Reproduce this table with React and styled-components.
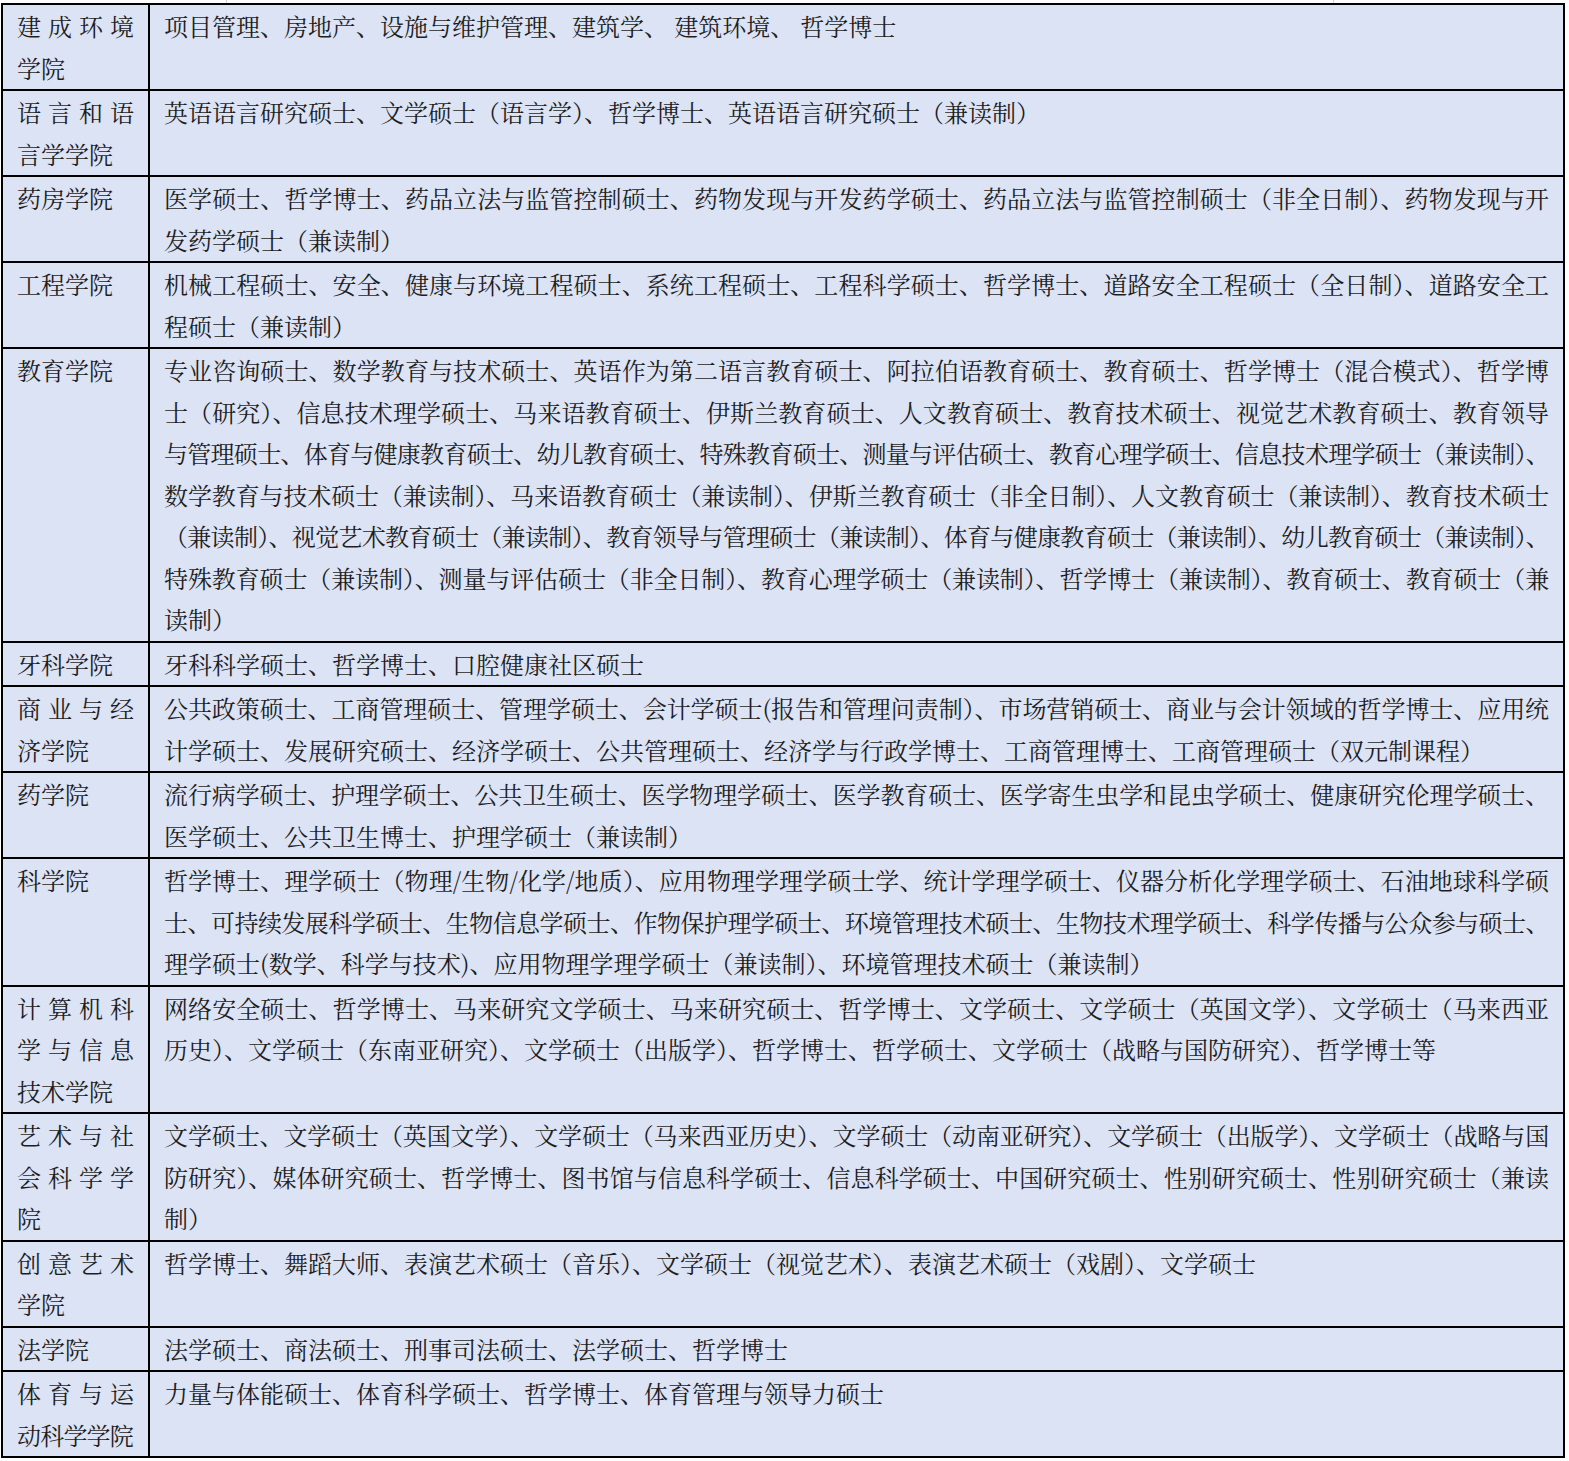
import { useLayoutEffect, useRef, useState } from "react";
import styled, { createGlobalStyle } from "styled-components";

const GlobalStyle = createGlobalStyle`
    html, body {
        margin: 0;
        padding: 0;
        background: #ffffff;
    }
`;

const Page = styled.div`
    padding: 3px 0 0 1px;
    font-family: "Noto Serif CJK SC", "Noto Sans CJK SC", serif;
    font-size: 24px;
    color: #1e1e1e;
`;

const Ruler = styled.div`
    height: 3px;
    margin-top: -3px;
    background-image:
        linear-gradient(#d0d0d0, #d0d0d0),
        linear-gradient(#d0d0d0, #d0d0d0);
    background-size: 1px 3px, 1px 3px;
    background-position: 225px 0, 1332px 0;
    background-repeat: no-repeat;
`;

const Table = styled.table`
    width: 1564px;
    border-collapse: collapse;
    table-layout: fixed;
    background: #dce3f5;
    border: 2px solid #000;
`;

const Cell = styled.td`
    border: 2px solid #000;
    vertical-align: top;
    padding: 0 14px 1px 14px;
    line-height: 41.5px;
    width: ${p => (p.$head ? "117px" : "auto")};
`;

const LineText = styled.div`
    white-space: nowrap;
    text-align: left;
    text-align-last: ${p => (p.$last ? "left" : "justify")};
`;

// one printed line; tightens letter spacing when it would overflow the cell
function Line({ text, last }) {
    const ref = useRef(null);
    const [spacing, setSpacing] = useState(0);

    useLayoutEffect(() => {
        const el = ref.current;
        if (!el || spacing) return;
        const over = el.scrollWidth - el.clientWidth;
        if (over > 0) setSpacing(-(over + 1) / text.length);
    }, [spacing, text]);

    return (
        <LineText
            ref={ref}
            $last={last}
            style={spacing ? { letterSpacing: spacing + "px" } : undefined}
        >
            {text}
        </LineText>
    );
}

function Lines({ lines }) {
    return lines.map((t, i) => <Line key={i} text={t} last={i === lines.length - 1} />);
}

const rows = [
    [["建成环境", "学院"], ["项目管理、房地产、设施与维护管理、建筑学、 建筑环境、 哲学博士"]],
    [["语言和语", "言学学院"], ["英语语言研究硕士、文学硕士（语言学）、哲学博士、英语语言研究硕士（兼读制）"]],
    [["药房学院"], [
        "医学硕士、哲学博士、药品立法与监管控制硕士、药物发现与开发药学硕士、药品立法与监管控制硕士（非全日制）、药物发现与开",
        "发药学硕士（兼读制）",
    ]],
    [["工程学院"], [
        "机械工程硕士、安全、健康与环境工程硕士、系统工程硕士、工程科学硕士、哲学博士、道路安全工程硕士（全日制）、道路安全工",
        "程硕士（兼读制）",
    ]],
    [["教育学院"], [
        "专业咨询硕士、数学教育与技术硕士、英语作为第二语言教育硕士、阿拉伯语教育硕士、教育硕士、哲学博士（混合模式）、哲学博",
        "士（研究）、信息技术理学硕士、马来语教育硕士、伊斯兰教育硕士、人文教育硕士、教育技术硕士、视觉艺术教育硕士、教育领导",
        "与管理硕士、体育与健康教育硕士、幼儿教育硕士、特殊教育硕士、测量与评估硕士、教育心理学硕士、信息技术理学硕士（兼读制）、",
        "数学教育与技术硕士（兼读制）、马来语教育硕士（兼读制）、伊斯兰教育硕士（非全日制）、人文教育硕士（兼读制）、教育技术硕士",
        "（兼读制）、视觉艺术教育硕士（兼读制）、教育领导与管理硕士（兼读制）、体育与健康教育硕士（兼读制）、幼儿教育硕士（兼读制）、",
        "特殊教育硕士（兼读制）、测量与评估硕士（非全日制）、教育心理学硕士（兼读制）、哲学博士（兼读制）、教育硕士、教育硕士（兼",
        "读制）",
    ]],
    [["牙科学院"], ["牙科科学硕士、哲学博士、口腔健康社区硕士"]],
    [["商业与经", "济学院"], [
        "公共政策硕士、工商管理硕士、管理学硕士、会计学硕士(报告和管理问责制）、市场营销硕士、商业与会计领域的哲学博士、应用统",
        "计学硕士、发展研究硕士、经济学硕士、公共管理硕士、经济学与行政学博士、工商管理博士、工商管理硕士（双元制课程）",
    ]],
    [["药学院"], [
        "流行病学硕士、护理学硕士、公共卫生硕士、医学物理学硕士、医学教育硕士、医学寄生虫学和昆虫学硕士、健康研究伦理学硕士、",
        "医学硕士、公共卫生博士、护理学硕士（兼读制）",
    ]],
    [["科学院"], [
        "哲学博士、理学硕士（物理/生物/化学/地质）、应用物理学理学硕士学、统计学理学硕士、仪器分析化学理学硕士、石油地球科学硕",
        "士、可持续发展科学硕士、生物信息学硕士、作物保护理学硕士、环境管理技术硕士、生物技术理学硕士、科学传播与公众参与硕士、",
        "理学硕士(数学、科学与技术)、应用物理学理学硕士（兼读制）、环境管理技术硕士（兼读制）",
    ]],
    [["计算机科", "学与信息", "技术学院"], [
        "网络安全硕士、哲学博士、马来研究文学硕士、马来研究硕士、哲学博士、文学硕士、文学硕士（英国文学）、文学硕士（马来西亚",
        "历史）、文学硕士（东南亚研究）、文学硕士（出版学）、哲学博士、哲学硕士、文学硕士（战略与国防研究）、哲学博士等",
    ]],
    [["艺术与社", "会科学学", "院"], [
        "文学硕士、文学硕士（英国文学）、文学硕士（马来西亚历史）、文学硕士（动南亚研究）、文学硕士（出版学）、文学硕士（战略与国",
        "防研究）、媒体研究硕士、哲学博士、图书馆与信息科学硕士、信息科学硕士、中国研究硕士、性别研究硕士、性别研究硕士（兼读",
        "制）",
    ]],
    [["创意艺术", "学院"], ["哲学博士、舞蹈大师、表演艺术硕士（音乐）、文学硕士（视觉艺术）、表演艺术硕士（戏剧）、文学硕士"]],
    [["法学院"], ["法学硕士、商法硕士、刑事司法硕士、法学硕士、哲学博士"]],
    [["体育与运", "动科学学院"], ["力量与体能硕士、体育科学硕士、哲学博士、体育管理与领导力硕士"]],
];

export default function App() {
    return (
        <>
            <GlobalStyle />
            <Page>
                <Ruler />
                <Table>
                    <tbody>
                        {rows.map(([school, degrees]) => (
                            <tr key={school.join("")}>
                                <Cell $head><Lines lines={school} /></Cell>
                                <Cell><Lines lines={degrees} /></Cell>
                            </tr>
                        ))}
                    </tbody>
                </Table>
            </Page>
        </>
    );
}
